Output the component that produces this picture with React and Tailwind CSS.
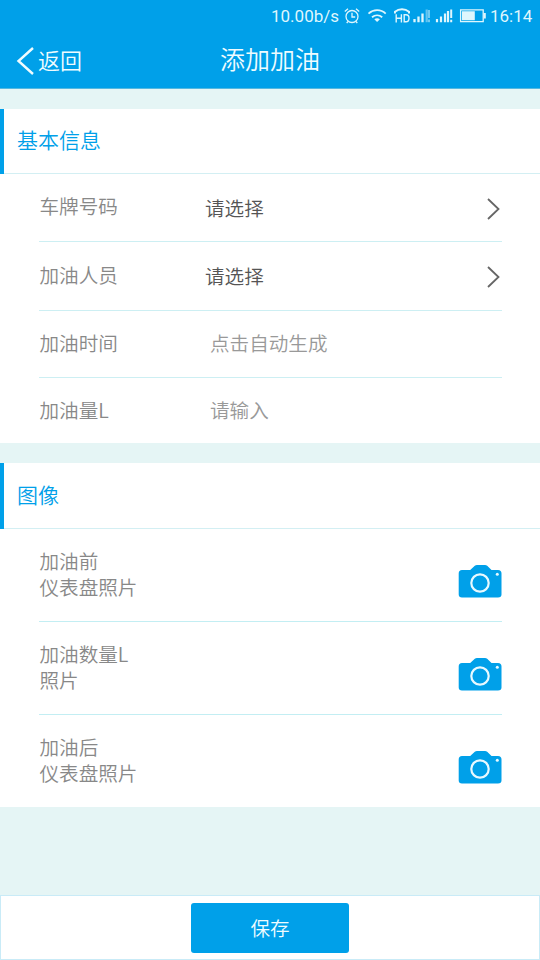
import React from "react";

const infoRows = [
  { label: "车牌号码", value: "请选择", select: true, height: "h-[68px]" },
  { label: "加油人员", value: "请选择", select: true, height: "h-[69px]" },
  { label: "加油时间", value: "点击自动生成", height: "h-[67px]" },
  { label: "加油量L", value: "请输入", height: "h-[65px]" },
];

const photoRows = [
  { lines: ["加油前", "仪表盘照片"], height: "h-[93px]" },
  { lines: ["加油数量L", "照片"], height: "h-[93px]" },
  { lines: ["加油后", "仪表盘照片"], height: "h-[92px]" },
];

function StatusIcons() {
  return (
    <svg width="148" height="18" viewBox="342 7 148 18" fill="none" stroke="#dff6fd" strokeWidth="1.3">
      {/* Alarm */}
      <circle cx="352" cy="16.5" r="6" />
      <path d="M352 12.8V17h3.2M344.8 11.5l3.2-2.8M359.2 11.5L356 8.7M348 21.5l-1.3 1.5M356 21.5l1.3 1.5" />
      {/* Wifi */}
      <path d="M368.5 13.6c5-4.6 12.3-4.6 17.2 0M372 17.3c3-2.6 7.2-2.6 10.2 0" strokeWidth="1.8" />
      <path d="M374.3 19.3L377.1 22l2.8-2.7c-1.7-1.3-3.9-1.3-5.6 0z" fill="#dff6fd" stroke="none" />
      {/* HD call */}
      <path d="M395 13.5v-1.8c4-3.2 10-3.2 14 0v1.8" strokeWidth="2" />
      <path d="M396.2 14.2v8.2M401.4 14.2v8.2M396.2 18.2h5.2M404.2 14.8v7h1.8c4 0 4-7 0-7z" strokeWidth="1.4" />
      {/* Signal 1 */}
      <path d="M414.5 19v3.2M418.5 16.5v5.7M422.5 13.5v8.7" strokeWidth="2.3" />
      <path d="M426.7 9.5v12.7" stroke="#65c5f0" strokeWidth="2.2" />
      <path d="M429 10v8M429 19.5v2.7" strokeWidth="1" />
      {/* Signal 2 */}
      <path d="M437 19v3.2M441 16.5v5.7M445 13.5v8.7M448 11v11.2" strokeWidth="2.2" />
      <path d="M451.2 9.5V18M451.2 19.8v2.4" strokeWidth="2" />
      {/* Battery */}
      <path d="M460.6 9.8h22.6v11.8h-22.6z" />
      <path d="M462 11.3h12.8v9H462zM483.5 13h2.3v5.5h-2.3z" fill="#dff6fd" stroke="none" />
    </svg>
  );
}

function Camera() {
  return (
    <svg width="44" height="34" viewBox="0 0 44 34" fill="#00a0e9">
      <path d="M4 6h8.2l4.6-4.3Q17.7 1 19 1h8q1.3 0 2.2.7L33.5 6H40q3.5 0 3.5 3.5v21q0 3-3.5 3H4q-3.3 0-3.3-3v-21Q.7 6 4 6z" />
      <circle cx="22" cy="19" r="8.7" fill="none" stroke="#e8f9ff" strokeWidth="2.2" />
      <circle cx="39.3" cy="10.2" r="1.5" fill="#e8f9ff" />
    </svg>
  );
}

function SectionTitle({ children, height }) {
  return (
    <h2 className={`flex items-stretch border-b border-[#d3eff3] bg-white text-[21px] text-[#00a0e9] ${height}`}>
      <span className="-mb-px w-1 bg-[#00a0e9]" />
      <span className="ml-[13px] self-center pb-1 leading-6">{children}</span>
    </h2>
  );
}

export default function App() {
  return (
    <div className="flex h-[960px] w-[540px] flex-col overflow-hidden bg-[#e5f5f5] font-['Noto_Sans_CJK_SC',sans-serif] font-[350]">
      {/* Header */}
      <header className="h-[89px] border-b border-[#55b8e0] bg-[#00a0e9] text-[#effcff]">
        <div className="flex h-8 items-center pl-[271px] font-[Roboto] text-[17px] font-normal text-[#dff6fd]">
          <span className="w-[71px] whitespace-nowrap pt-px">10.00b/s</span>
          <StatusIcons />
          <span className="pt-px">16:14</span>
        </div>
        <div className="grid h-14 grid-cols-3 items-center">
          <button className="flex items-center pl-[16px] text-[22px]">
            <svg className="mt-0.5" width="18" height="28" viewBox="0 0 18 28" fill="none" stroke="currentColor" strokeWidth="2.4">
              <path d="M17 1L2.5 14L17 27" />
            </svg>
            <span className="ml-1 pb-[3px] leading-7">返回</span>
          </button>
          <h1 className="pb-[5px] text-center text-[25px] leading-7">添加加油</h1>
        </div>
      </header>

      {/* Basic info */}
      <section className="mt-5 bg-white">
        <SectionTitle height="h-[65px]">基本信息</SectionTitle>
        <div className="ml-[39px] w-[463px] divide-y divide-[#cdeff3]">
          {infoRows.map((row) => (
            <div key={row.label} className={`flex items-center pl-[0.5px] text-[19.6px] leading-7 ${row.height}`}>
              {row.select ? (
                <>
                  <span className="w-[165.5px] pb-[3px] text-[#888]">{row.label}</span>
                  <span className="flex-1 text-[#555]">{row.value}</span>
                  <svg className="mr-[2px] mt-0.5" width="13" height="22" viewBox="0 0 13 22" fill="none" stroke="#666" strokeWidth="1.8">
                    <path d="M1 1l10.5 10L1 21" />
                  </svg>
                </>
              ) : (
                <>
                  <span className="w-[170.5px] pb-[2px] text-[#888]">{row.label}</span>
                  <span className="flex-1 pb-[2px] text-[#999]">{row.value}</span>
                </>
              )}
            </div>
          ))}
        </div>
      </section>

      {/* Photos */}
      <section className="mt-5 bg-white">
        <SectionTitle height="h-[66px]">图像</SectionTitle>
        <div className="ml-[39px] w-[463px] divide-y divide-[#c3eef3]">
          {photoRows.map((row) => (
            <div key={row.lines[0]} className={`flex items-center justify-between ${row.height}`}>
              <div className="pb-[3px] pl-[0.5px] text-[19.6px] leading-[26px] text-[#888]">
                <p>{row.lines[0]}</p>
                <p>{row.lines[1]}</p>
              </div>
              <div className="mt-3">
                <Camera />
              </div>
            </div>
          ))}
        </div>
      </section>

      {/* Save */}
      <footer className="mt-auto flex h-[65px] items-center justify-center border border-[#c9ebf7] bg-white">
        <button className="h-[50px] w-[158px] rounded-[3px] bg-[#00a0e9] text-[19.6px] text-[#effcff]">
          保存
        </button>
      </footer>
    </div>
  );
}
